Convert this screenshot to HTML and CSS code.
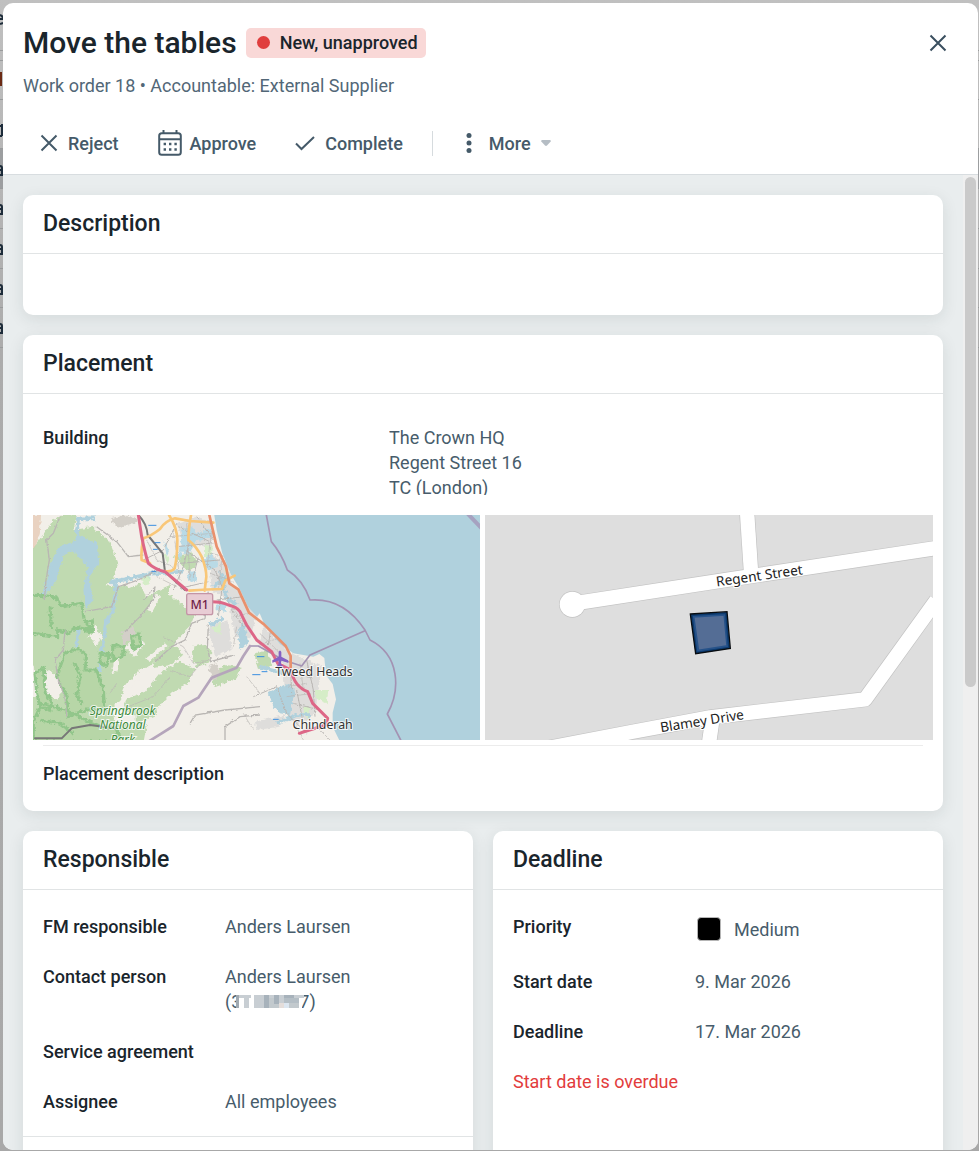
FILE: index.html
```html
<!DOCTYPE html>
<html lang="en">
<head>
<meta charset="utf-8">
<title>Move the tables</title>
<meta name="viewport" content="width=device-width, initial-scale=1">
<link rel="stylesheet" href="styles.css">
</head>
<body>
<div class="page-behind" aria-hidden="true">
  <svg class="behind-lines" width="100%" height="350">
    <path d="M0 50.500H3000M0 60.500H3000M0 99.500H3000M0 148.500H3000M0 188.500H3000M0 228.500H3000M0 268.500H3000M0 307.500H3000M0 347.500H3000" stroke="#999b9c"/>
    <path d="M0 149H3000V188H0z" fill="#9c9ea0"/>
    <path d="M0 72h2v14H0z" fill="#6b2a14"/>
    <g fill="none" stroke="#1d2c3a" stroke-width="2">
      <path d="M0 15q3 1 3 4H0M0 24l3-1M2 124v12M0 126h2M0 136h2"/>
      <path id="tail" d="M0 166q2 0 2 2v8M0 170h2M0 175h2"/>
      <use href="#tail" y="39"/><use href="#tail" y="79"/><use href="#tail" y="119"/><use href="#tail" y="158"/>
    </g>
  </svg>
</div>
<main class="modal" role="dialog" aria-labelledby="title">
  <header class="modal-header">
    <div class="title-row">
      <h1 id="title">Move the tables</h1>
      <span class="badge"><span class="dot"></span>New, unapproved</span>
      <button class="close" type="button" aria-label="Close">
        <svg width="18" height="18" viewBox="0 0 18 18"><path d="M1.500 1.500l15 15M16.500 1.500l-15 15"/></svg>
      </button>
    </div>
    <p class="subtitle">Work order 18 • Accountable: External Supplier</p>
    <div class="toolbar">
      <button type="button" class="tool reject">
        <svg width="18" height="18" viewBox="0 0 18 18"><path d="M1.500 1.500l15 15M16.500 1.500l-15 15"/></svg>Reject
      </button>
      <button type="button" class="tool approve">
        <svg width="24" height="26" viewBox="0 0 24 26"><rect x="1.200" y="3.200" width="21.600" height="21.600" rx="2.500"/><path d="M1 9.200h22M5.500 0v4M18.500 0v4"/><path stroke-width="2.400" stroke-dasharray="2.400 3" d="M5.600 14h13.500M5.600 19.500h13.500"/></svg>Approve
      </button>
      <button type="button" class="tool complete">
        <svg width="20" height="16" viewBox="0 0 20 16"><path d="M1 8.500l5.500 5.500L19 2"/></svg>Complete
      </button>
      <span class="separator"></span>
      <button type="button" class="tool more">
        <svg class="solid" width="6" height="20" viewBox="0 0 6 20"><circle cx="3" cy="2.500" r="2.500"/><circle cx="3" cy="10" r="2.500"/><circle cx="3" cy="17.500" r="2.500"/></svg>More
        <svg class="caret" width="10" height="6" viewBox="0 0 10 6"><path d="M1 0h8q1 0 .7 1.500L6 5.500q-1 .8-2 0L.3 1.500Q0 0 1 0z"/></svg>
      </button>
    </div>
  </header>

  <div class="modal-body">
    <div class="cards">
      <section class="card">
        <h2>Description</h2>
        <div class="empty"></div>
      </section>

      <section class="card">
        <h2>Placement</h2>
        <dl class="fields wide">
          <div class="field"><dt>Building</dt><dd class="address">The Crown HQ<br>Regent Street 16<br>TC (London)</dd></div>
        </dl>
        <div class="maps">
          <svg class="map" viewBox="9 15 1341 675" preserveAspectRatio="xMidYMid slice" role="img" aria-label="Area map">
            <defs>
              <filter id="rough" x="-5%" y="-5%" width="110%" height="110%">
                <feTurbulence type="fractalNoise" baseFrequency=".09" numOctaves="3" seed="4"/>
                <feDisplacementMap in="SourceGraphic" scale="16" xChannelSelector="R" yChannelSelector="G"/>
              </filter>
              <filter id="wobble" x="-5%" y="-5%" width="110%" height="110%">
                <feTurbulence type="fractalNoise" baseFrequency=".1" numOctaves="2" seed="9"/>
                <feDisplacementMap in="SourceGraphic" scale="9" xChannelSelector="R" yChannelSelector="G"/>
              </filter>
            </defs>
            <rect x="9" y="15" width="1341" height="675" fill="#f2efe9"/>
            <g filter="url(#rough)">
              <path fill="#c0dab1" d="M0 130L70 30 110 10 140 20 130 60 190 50 240 95 265 160 250 200 300 235 330 220 350 265 385 240 420 225 420 255 465 290 500 300 480 350 440 390 425 420 385 430 375 455 340 480 290 520 270 570 240 600 260 640 350 645 340 700H0V560L60 560 100 530 60 480 30 500 0 450z"/>
              <path fill="#c0dab1" d="M490 410l30-8 25 20-5 38-40 10-15-25zM400 480l50-25 45 20-20 45-50 30-50 50-70 15-30-20 20-30 50-20zM380 420l60-10 20 25-40 30-50 10zM320 590l70-20-10 45-60 25zM545 490l40-25 50 5-15 35-70 25zM630 0h30v10zM672 430l40-8 15 45-40 10zM842 505l25 5-5 30-18-8zM430 140l55-10 20 30-30 25z"/>
              <path fill="#d3cfc8" d="M240 25l55-10 30 20-60 18zM275 365l35-15 10 25-40 30zM535 470l25-10 10 30-20 25z"/>
              <path fill="#e3bfa5" d="M5 15h28l-4 60-14 40-10 10z" opacity=".6"/>
              <path fill="#f2efe9" d="M40 480l35 15 20 55-20 20-30-30zM195 345l20 35-15 30-20-30zM225 225l55-40 40 25-60 20zM245 490l12-60 12 15-10 40zM285 410l40-30 20 20-30 40zM170 380l25-10 5 20zM280 530l60-60 12 6-50 62zM345 445l60-45 8 8-55 45zM350 300l30-50 10 10-25 50zM60 165l14-6-4 26z"/>
              <path fill="#dedddb" d="M535 130l55 25 20 70 40 50 30 40-20 70-45-5-20-110-50-30zM440 40l60-20 50 15-5 80-90-20zM535 350l60-20 10 90-50 20zM700 350l85 80 90 40-20 140-60 40-30-70-10-120-70-60zM675 635l90-20-15 35-70 10z"/>
              <path fill="#d5edc7" d="M335 200l22-8 5 30-22 5zM525 100l25 10-10 45-15-10zM545 355l28-15-5 35zM855 540l40 0-5 40-35-15zM820 590l22 0-5 35-15-5zM585 170l15 20-10 20zM400 130l18 14-6 18z"/>
            </g>
            <g filter="url(#rough)">
              <path fill="#b0d1dd" d="M88 110l45-15 10-25 20 15 40 15 5 60-30 40 10 70-20 30-8-60 12-70-45-50-25 15-25 80-25 30 5-75 25-50zM715 545l60-25 20 20-15 75-30-5-20-20zM640 330l15 70-25 20-8-55z"/>
              <path fill="#b9dae6" d="M455 60l30-15 20 40-30 50-25-10zM500 70l40-12 8 20-40 14zM400 90l20 30-10 20zM515 150l30-20 20 40-30 10zM470 190l26-8 4 30-24 6zM440 120l18 10-8 24zM560 280l30 4-4 22-26-6z"/>
              <path fill="none" stroke="#b0d1dd" stroke-width="11" d="M195 25l-50 0-5 50M240 210l20 20-12 70-20 35-10 70-10 80M150 340l-12 70M250 215l120-25 90-5M570 185l20 80 30 20M540 345l40-20M9 270l35-20 20-80M690 470l70 20M550 230l40-30M740 640l60-25 40 0"/>
            </g>
            <g filter="url(#rough)" fill="#b7d6a7" stroke="#92c68b" stroke-width="9">
              <path d="M5 255l70 5 20 28 60-8 8 50 20 30-45-8-20 18-35-10v20L5 370M105 430l40-15 25 20-5 45 35 0 20 60 5 60-60 0-50 20-5-60-30-60zM210 430l28 4-8 34-20-8zM248 408l30 0 5 25-35 18zM305 380l22-10 5 35-22 12zM15 490l25-15 5 70 20 30-5 25-30-10-10-40zM35 580l70 20 60 30 50 20 45 5 10 40H10v-60z"/>
              <path fill="none" d="M135 460l15 40-10 60 20 20M60 290l5 70M165 335l22-5v36l-24-4M30 630l60 10 40 30"/>
            </g>
            <g fill="none" stroke="#b9b6b3" stroke-width="4" filter="url(#wobble)">
              <path d="M90 20l-20 50-20 20 8 60-10 60-5 60M200 50l60 45 35 45 45-5M165 305l80-15 20-60 60-20 65-35M105 360l-5 60-25 30 10 60 20 50 5 60M375 230l-5 40-40 50-45 45M375 455l50-45 40-20 20-50 40-15 10-80M480 640l15-25 90-15 105-10M585 690l0-40 45-30 60-5M535 345l-3 70 10 40 70-20"/>
              <path stroke-width="3" d="M440 110l100-10M450 160l120-10M480 90l-20 80-30 70M445 50l105 50M465 120l90 60 25 60M500 20l50 70M340 150l60-30 40-80M560 270l80-10M575 240l-10 80M600 290l40 60M450 235l85-20M505 140l-15 60M340 270l35-40M725 340l-10 65M780 430l5 120M830 450l20 90 5 80M790 580l80 20M800 540l20 100M670 560l70-30 30 80 60 60"/>
              <path stroke-width="2" d="M420 80l130-10M430 60l20 150M470 40l10 170M545 60l-20 160M350 90l30 60 50 20M380 200l60 30M540 130l50 10M540 190l60 20M575 150l-10 90M590 270l60 80M610 320l50-10M620 350l-10 60M690 370l60 60M700 400l60-20M770 530l60-10M770 560l80-10M760 480l80 20M810 460l10 80M650 500l40 50M400 380l60 30 30 50 50-10M420 480l60 20 40-50M240 550l20-30M270 600l100-40 50-60M640 610l30 50M800 650l20 40M860 650l40 40"/>
            </g>
            <path fill="#b0d1dd" d="M552 10l8 50 17 70 25 62 26 43 26 55 27 30 8-10 17 40 44 52 40 28 60 10 18-8 15 12 5 52 20 26 10 46-10 40v42l22 45H1355V10z"/>
            <g fill="none" stroke-linejoin="round" stroke-linecap="round">
              <path stroke="#a393b3" stroke-width="5" d="M709 15l15 80q30 35 48 85 48 30 68 90 100-8 165 90l15 30c90 45 92 150 52 222l40 78M1005 362L840 435l-25 33-55-18-75-42H660"/>
              <path stroke="#b5a5bb" stroke-width="8" d="M660 408l-20 30-20 35-75 30-40 60-45 25-30 60-35 22-40 25"/>
              <path stroke="#a38fb3" stroke-width="12" opacity=".7" d="M1312 10l48 50"/>
              <path stroke="#777" stroke-width="6" d="M325 15q25 25 28 60l45 55 7 55 60 55M15 685l80 0 30-30 55-10 75 10"/>
              <path stroke="#f9c778" stroke-width="8" d="M550 38l-70-5-45-8q-30 8-45 32-25 20-50 28-8 40-5 65l25 10M417 15q25 40 25 75 0 50-8 85-10 12-30 8M483 15q-8 45-8 75 25 20 40 50 14 35 14 60l-5 42M478 242q60-5 98-5l10-25 28-15"/>
              <path stroke="#e9916d" stroke-width="8" d="M538 15l22 95 28 60 10 50 27 18 32 70 45 35 65 65 15 30v40"/>
              <path stroke="#dd6787" stroke-width="9" d="M325 15l10 65q10 50 20 80 20 18 50 25l65 55M545 275q30 0 50 10 25 5 35 20 12 25 20 40l30 45 45 35 18 35 40 20q10 50 50 65l15 35 45 45-5 20q-50 15-80 25"/>
              <path stroke="#3b8fe0" stroke-width="3" d="M356 46h22M375 98h15M370 118h12M365 184h12M682 440h20M668 494h22M696 485h15M730 628h15"/>
            </g>
            <path fill="#8461c4" d="M746 426q4-9 8 0v14l20 11v7l-20-6-1 10 9 8h-24l8-8-1-10-18 6v-7l19-11z"/>
            <rect x="470" y="251" width="78" height="63" rx="6" fill="#e8ccd4" stroke="#c495a6" stroke-width="4"/>
            <g class="map-label">
              <text x="509" y="297" font-size="37" font-weight="500" fill="#702247">M1</text>
              <g stroke="#fff" stroke-opacity=".75" stroke-width="6" paint-order="stroke">
                <text x="852" y="499" font-size="37" fill="#333">Tweed Heads</text>
                <text x="878" y="657" font-size="37" fill="#333">Chinderah</text>
                <g font-size="36" font-style="italic" fill="#3c8a3c"><text x="278" y="615">Springbrook</text><text x="278" y="658">National</text><text x="278" y="701">Park</text></g>
              </g>
            </g>
          </svg>
          <svg class="map" viewBox="15 15 1344 675" preserveAspectRatio="xMidYMid slice" role="img" aria-label="Street map">
            <rect x="0" y="0" width="1380" height="710" fill="#dedede"/>
            <g fill="none" stroke-linejoin="round">
              <g stroke="#c3c3c3" stroke-width="47"><path id="r1" d="M277 281l473-73 620-94"/><path id="r2" d="M801 5l12 180"/><path id="r3" d="M100 734l350-67 240-45 465-54 214-297"/><path id="r4" d="M697 630l-10 70"/></g>
              <circle cx="277" cy="283" r="40" fill="#c3c3c3"/>
              <circle cx="277" cy="283" r="38" fill="#fff"/>
              <g stroke="#fff" stroke-width="43"><use href="#r1"/><use href="#r2"/><use href="#r3"/><use href="#r4"/></g>
            </g>
            <path fill="#546d95" stroke="#265289" stroke-width="10" d="M638 318l97-6 9 98-91 14z"/>
            <path fill="none" stroke="#0c3a6e" stroke-width="6" d="M635 315l103-6 9 104-98 15z"/>
            <path fill="none" stroke="#080c10" stroke-width="4" d="M631 312l110-7 10 110-104 16z"/>
            <g class="map-label" fill="#222" stroke="#fff" stroke-width="6" paint-order="stroke" font-size="41">
              <text transform="translate(840 211) rotate(-8)">Regent Street</text>
              <text transform="translate(668 647) rotate(-9)">Blamey Drive</text>
            </g>
          </svg>
        </div>
        <h3 class="subheading">Placement description</h3>
      </section>

      <div class="columns">
        <section class="card">
          <h2>Responsible</h2>
          <dl class="fields">
            <div class="field"><dt>FM responsible</dt><dd>Anders Laursen</dd></div>
            <div class="field"><dt>Contact person</dt><dd>Anders Laursen<br>(3<svg class="redacted" width="72" height="13" viewBox="0 0 72 13" role="img" aria-label="Hidden number"><path fill="#fff" d="M0 3h66v10H0z"/><path fill="#a0a9b1" d="M0 0h3v13H0z"/><path fill="#c8ced3" d="M3 0h12v3H3zM8 3h5v10H8zM18 0h50v3H18zM18 3h10v10H18zM43 3h5v5H43z"/><path fill="#a7b2bb" d="M28 0h5v13h-5zM38 0h5v9h-5zM48 0h10v3H48z"/><path fill="#b4bec5" d="M48 3h15v5H48z"/><path fill="#c2c9cd" d="M33 3h5v10h-5zM38 9h5v4h-5zM53 8h10v5H53z"/><path fill="#dce6f0" d="M48 8h5v5h-5z"/><path fill="#e4ddda" d="M43 8h5v5h-5z"/></svg>7)</dd></div>
            <div class="field"><dt>Service agreement</dt><dd></dd></div>
            <div class="field"><dt>Assignee</dt><dd>All employees</dd></div>
          </dl>
          <div class="next-section"></div>
        </section>
        <section class="card">
          <h2>Deadline</h2>
          <dl class="fields">
            <div class="field"><dt>Priority</dt><dd class="priority"><span class="swatch"></span>Medium</dd></div>
            <div class="field"><dt>Start date</dt><dd>9. Mar 2026</dd></div>
            <div class="field"><dt>Deadline</dt><dd>17. Mar 2026</dd></div>
          </dl>
          <p class="overdue">Start date is overdue</p>
        </section>
      </div>
    </div>
    <div class="scroll-track" aria-hidden="true"><div class="scroll-thumb"></div></div>
  </div>
</main>
</body>
</html>
```

FILE: styles.css
```css
* { box-sizing: border-box; }

body {
  margin: 0;
  height: 100vh;
  padding: 3px 1px 1px 3px;
  overflow: hidden;
  background: #b0b0b0;
  color: #1a252c;
  font: 400 18px/25px Roboto, "Liberation Sans", sans-serif;
}

h1, h2, h3, p, dl, dd { margin: 0; }

.page-behind {
  position: absolute;
  inset: 0;
  background: linear-gradient(#c0c0c0, #acacac 30%, #a8a8a8);
}

.modal {
  position: relative;
  display: flex;
  flex-direction: column;
  height: 100%;
  overflow: hidden;
  border-radius: 10px;
  background: #fff;
}

.modal-header {
  flex: none;
  padding: 20px 20px 11px;
  border-bottom: 1px solid #d8dde0;
}

.title-row { display: flex; align-items: center; gap: 9px; height: 40px; }

h1 { font-size: 30px; line-height: 40px; font-weight: 500; }

.badge {
  display: flex;
  align-items: center;
  gap: 10px;
  height: 30px;
  padding: 0 8px 2px 11px;
  border-radius: 5px;
  background: #f9d8d7;
  font-weight: 500;
}

.dot { width: 13px; height: 13px; border-radius: 50%; background: #e03e3e; }

button {
  border: 0;
  padding: 0;
  background: none;
  color: #455a69;
  font: inherit;
  font-weight: 500;
  cursor: pointer;
}

button svg { flex: none; fill: none; stroke: #455a69; stroke-width: 2; }
button .solid { fill: #455a69; stroke: none; }
button .caret { fill: #b5bdc4; stroke: none; }

.close { display: flex; margin-left: auto; padding: 11px; }
.close svg { stroke: #3a4f5f; }

.subtitle { margin-top: 10px; color: #526777; }

.toolbar { display: flex; align-items: center; height: 40px; margin-top: 25px; padding-left: 17px; }
.tool { display: flex; align-items: center; gap: 10px; height: 40px; }
.approve { gap: 8px; margin-left: 39px; }
.complete { margin-left: 39px; }
.separator { width: 1px; height: 25px; margin: 0 33px 0 29px; background: #d6dbde; }
.more svg:first-child { margin-right: 7px; }

.modal-body { flex: 1; display: flex; min-height: 0; background: #e9edee; }

.cards {
  flex: 1;
  min-width: 0;
  padding: 20px;
  display: flex;
  flex-direction: column;
  gap: 20px;
  overflow-y: auto;
  scrollbar-width: none;
}

.card {
  flex: none;
  border-radius: 10px;
  background: #fff;
  box-shadow: 0 4px 16px rgba(30, 50, 50, 0.1);
}

h2 {
  padding: 14px 20px;
  border-bottom: 1px solid #e1e4e5;
  font-size: 23px;
  line-height: 30px;
  font-weight: 500;
}

.empty { height: 61px; }

.fields { display: grid; gap: 25px; padding: 24px 20px 22px; }
.fields.wide { padding: 31px 20px 20px; }
.field { display: grid; grid-template-columns: 182fr 228fr; }
.wide .field { grid-template-columns: 346fr 534fr; }
dt { font-weight: 500; }
dd { color: #475c6b; }
.address { height: 70px; overflow: hidden; }

.maps { display: grid; grid-template-columns: 447fr 448fr; gap: 5px; padding: 0 10px; }
.map { display: block; width: 100%; height: 225px; }
.map-label { font-family: "Noto Sans", sans-serif; text-anchor: middle; }

.subheading {
  margin: 5px 20px 0;
  padding: 15px 0 25px;
  border-top: 1px solid #ececec;
  font-size: 18px;
  line-height: 25px;
  font-weight: 500;
}

.columns { flex: none; display: grid; grid-template-columns: 1fr 1fr; gap: 20px; }

.redacted { position: relative; margin: 0 -9px 0 -5px; }

.priority { display: flex; align-items: center; gap: 13px; height: 30px; padding-left: 2px; }
.swatch { width: 24px; height: 24px; border: 1px solid #b5b5b5; border-radius: 4px; background: #000; }

.overdue { padding: 3px 20px 22px; color: #e23c3c; }

.next-section { height: 70px; border-top: 1px solid #e1e4e5; }

.scroll-track { flex: none; width: 15px; padding: 2px; background: #efefef; }
.scroll-thumb { width: 11px; height: 525px; max-height: 53%; border-radius: 6px; background: #cacaca; }
.scroll-thumb { height: 52.5%; }
```
